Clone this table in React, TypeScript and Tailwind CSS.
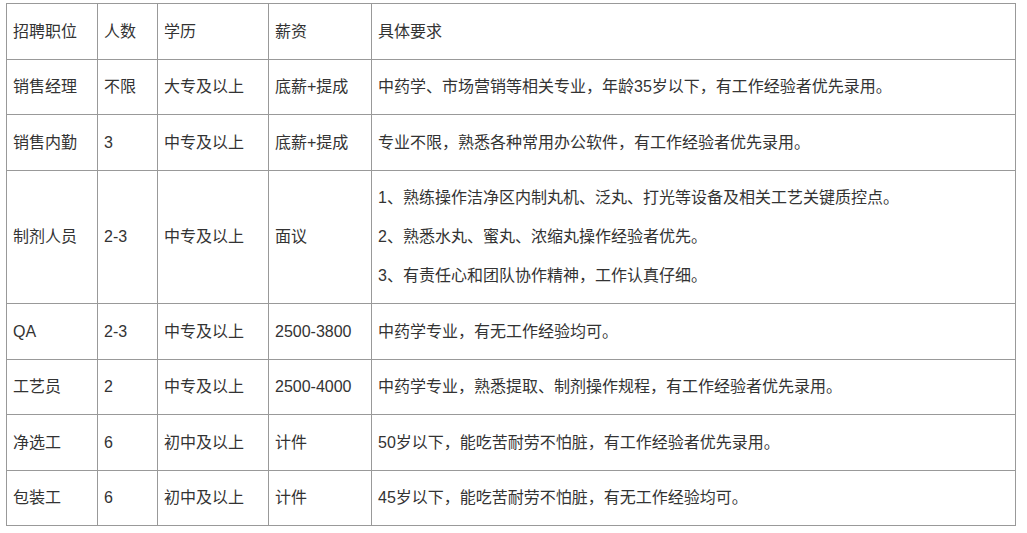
import React from "react";

type Row = { pos: string; num: string; edu: string; pay: string; req: string[] };

const rows: Row[] = [
  { pos: "销售经理", num: "不限", edu: "大专及以上", pay: "底薪+提成", req: ["中药学、市场营销等相关专业，年龄35岁以下，有工作经验者优先录用。"] },
  { pos: "销售内勤", num: "3", edu: "中专及以上", pay: "底薪+提成", req: ["专业不限，熟悉各种常用办公软件，有工作经验者优先录用。"] },
  {
    pos: "制剂人员",
    num: "2-3",
    edu: "中专及以上",
    pay: "面议",
    req: [
      "1、熟练操作洁净区内制丸机、泛丸、打光等设备及相关工艺关键质控点。",
      "2、熟悉水丸、蜜丸、浓缩丸操作经验者优先。",
      "3、有责任心和团队协作精神，工作认真仔细。",
    ],
  },
  { pos: "QA", num: "2-3", edu: "中专及以上", pay: "2500-3800", req: ["中药学专业，有无工作经验均可。"] },
  { pos: "工艺员", num: "2", edu: "中专及以上", pay: "2500-4000", req: ["中药学专业，熟悉提取、制剂操作规程，有工作经验者优先录用。"] },
  { pos: "净选工", num: "6", edu: "初中及以上", pay: "计件", req: ["50岁以下，能吃苦耐劳不怕脏，有工作经验者优先录用。"] },
  { pos: "包装工", num: "6", edu: "初中及以上", pay: "计件", req: ["45岁以下，能吃苦耐劳不怕脏，有无工作经验均可。"] },
];

const cell = "border border-[#999] px-[6px] py-[7.75px] align-middle text-left font-normal";

export default function App() {
  return (
    <div
      className="bg-white w-[1027px] h-[533px] pt-[3px] pl-[6px] text-[16px] leading-[39px] text-[#333]"
      style={{ fontFamily: '"Liberation Sans", "Noto Sans CJK SC", sans-serif' }}
    >
      <table className="border-collapse table-fixed w-[1009px]">
        <colgroup>
          <col className="w-[91px]" />
          <col className="w-[60px]" />
          <col className="w-[111px]" />
          <col className="w-[103px]" />
          <col className="w-[644px]" />
        </colgroup>
        <thead>
          <tr>
            <th className={cell}>招聘职位</th>
            <th className={cell}>人数</th>
            <th className={cell}>学历</th>
            <th className={cell}>薪资</th>
            <th className={cell}>具体要求</th>
          </tr>
        </thead>
        <tbody>
          {rows.map((r) => (
            <tr key={r.pos}>
              <td className={cell}>{r.pos}</td>
              <td className={cell}>{r.num}</td>
              <td className={cell}>{r.edu}</td>
              <td className={cell}>{r.pay}</td>
              <td className={cell}>
                {r.req.map((l) => (
                  <div key={l}>{l}</div>
                ))}
              </td>
            </tr>
          ))}
        </tbody>
      </table>
    </div>
  );
}
